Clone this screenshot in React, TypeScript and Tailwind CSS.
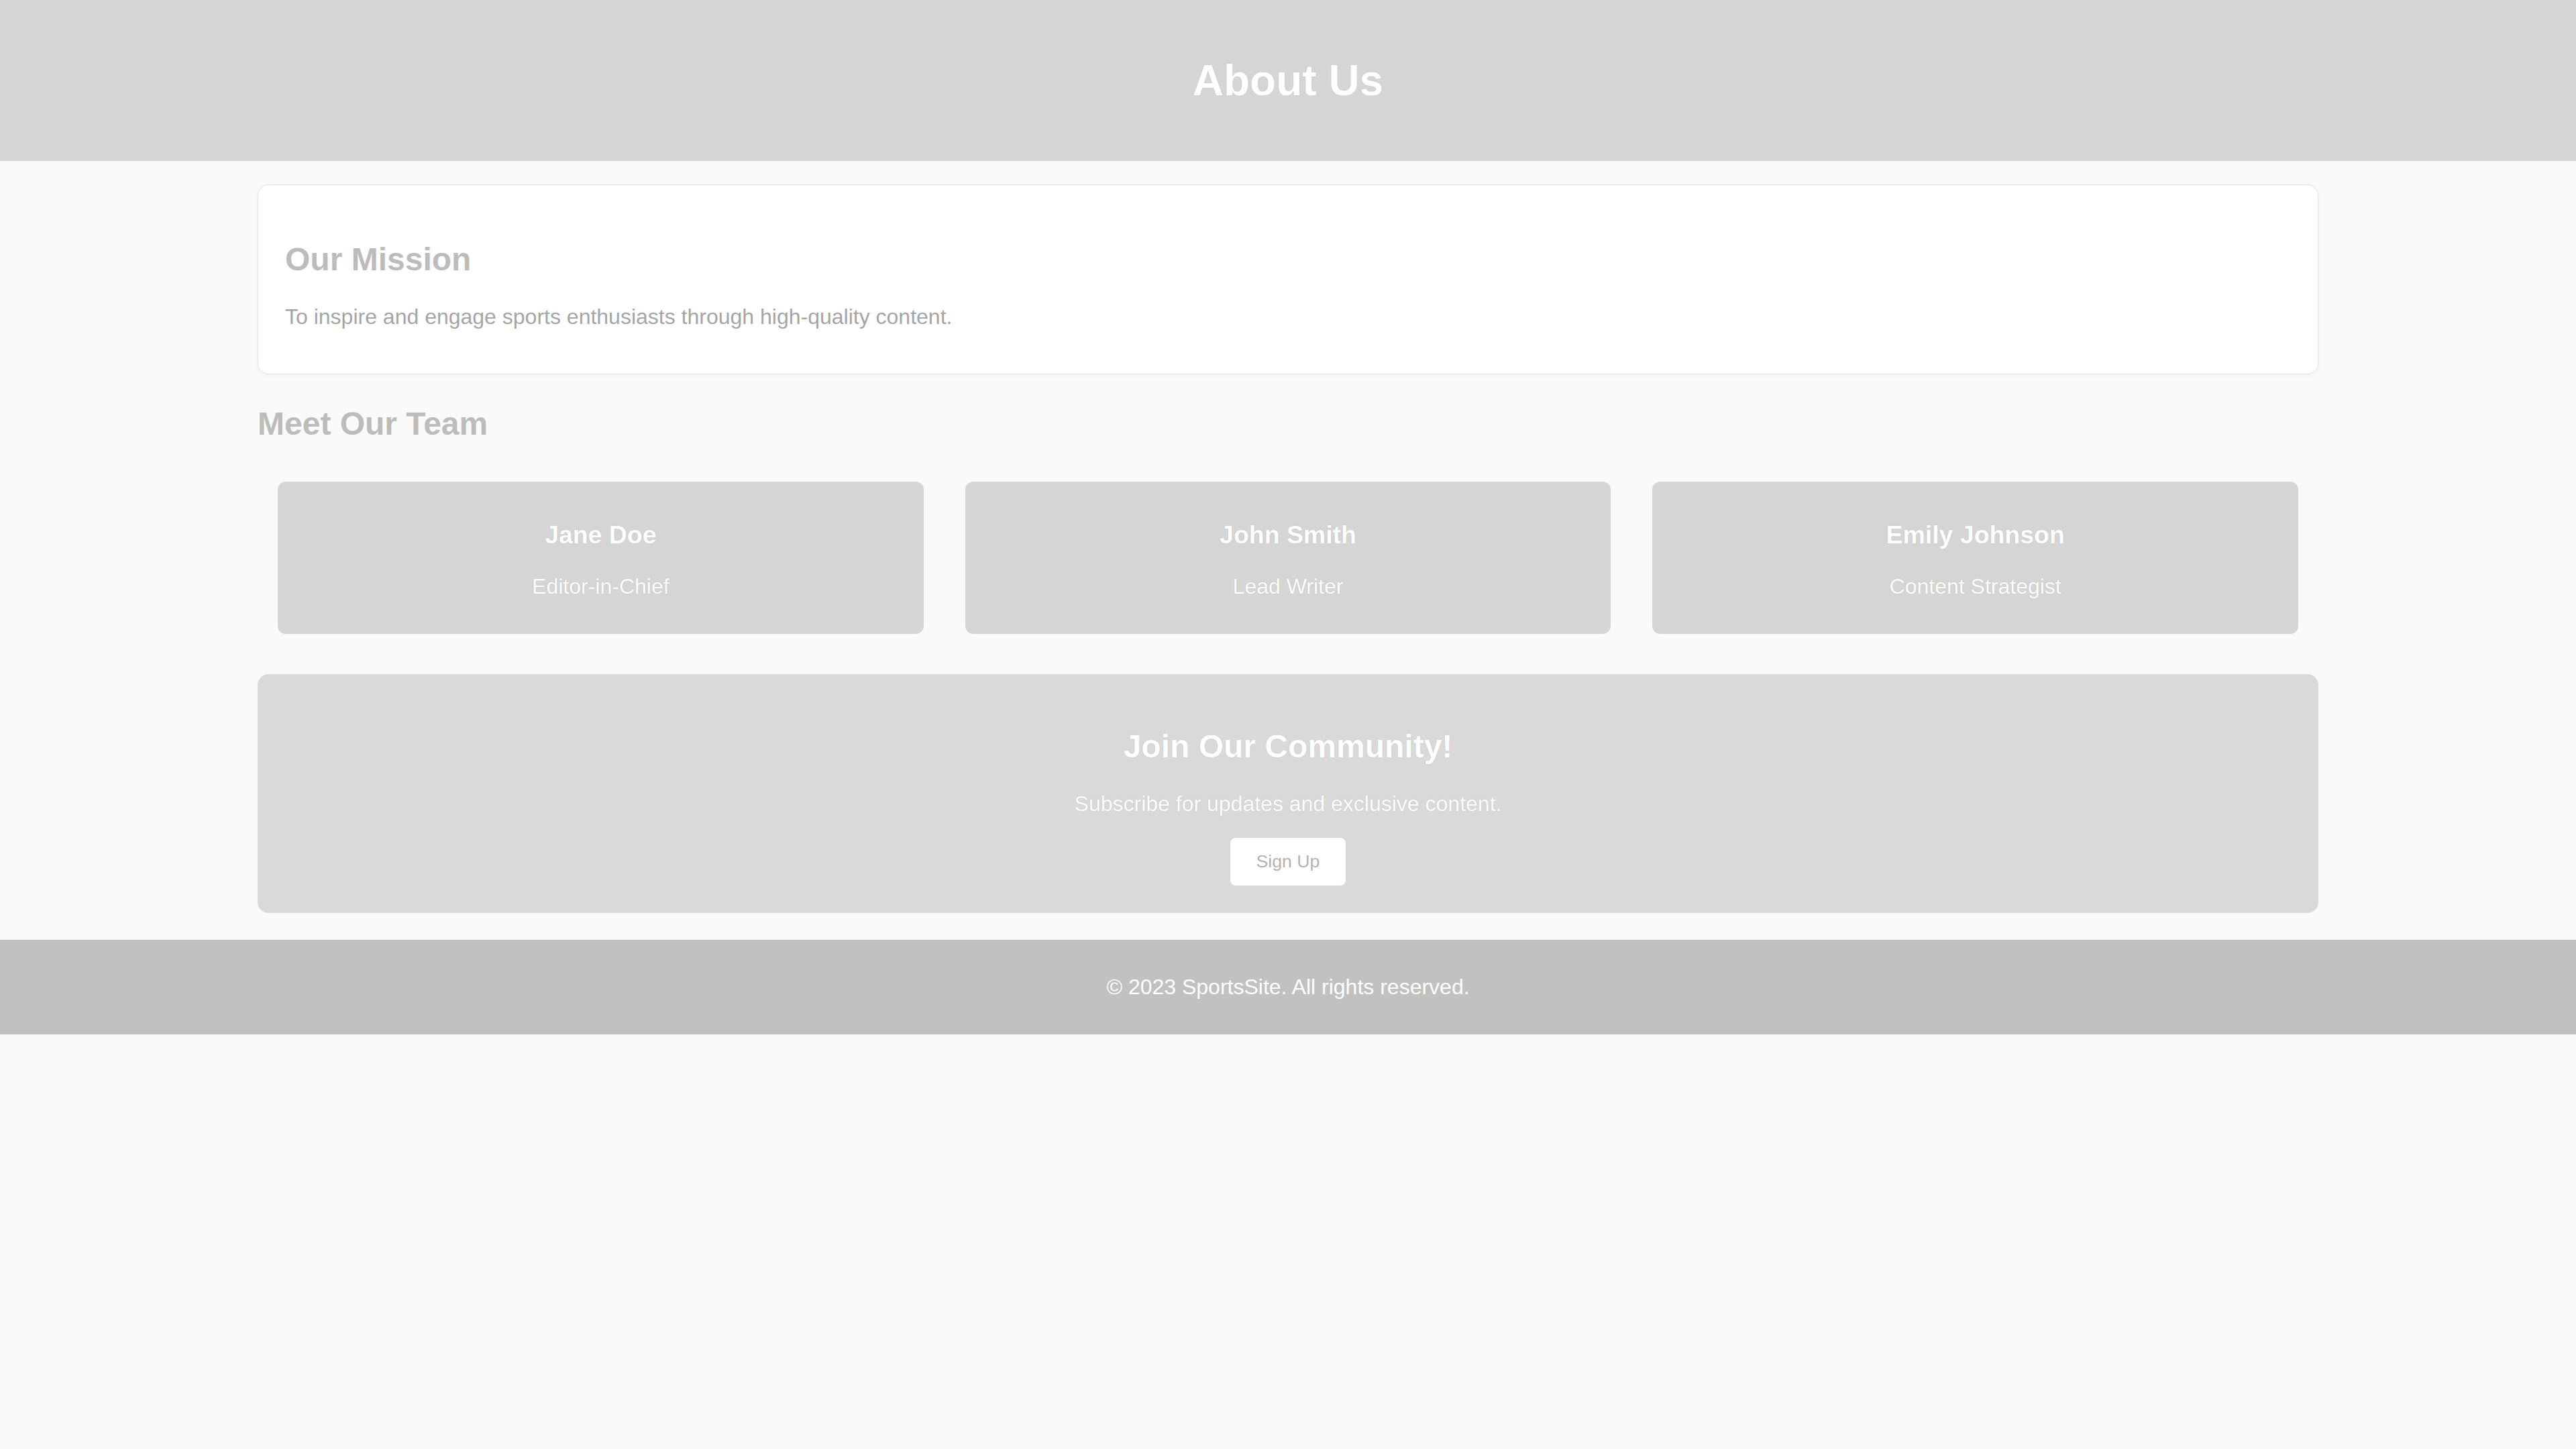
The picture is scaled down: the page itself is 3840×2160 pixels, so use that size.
import React from "react";

const team = [
  { name: "Jane Doe", role: "Editor-in-Chief" },
  { name: "John Smith", role: "Lead Writer" },
  { name: "Emily Johnson", role: "Content Strategist" },
];

export default function App() {
  return (
    <div className="min-h-screen bg-[#fafafa] font-['Liberation_Sans',Arial,sans-serif]">
      <header className="h-[240px] bg-[#d5d5d5] flex items-center justify-center">
        <h1 className="text-[64px] leading-[74px] font-bold text-white [text-shadow:0_0_1px_rgba(0,0,0,0.18)]">About Us</h1>
      </header>

      <main className="w-[3072px] mx-auto pt-[35px] pb-[40px] flex flex-col">
        <section className="bg-white border border-[#e3e3e3] rounded-[16px] shadow-[0_2px_10px_rgba(0,0,0,0.04)] px-[40px] pt-[83px] pb-[66px]">
          <h2 className="text-[48px] leading-[55px] font-bold text-[#bcbcbc]">Our Mission</h2>
          <p className="mt-[40px] text-[32px] leading-[37px] text-[#a5a5a5]">
            To inspire and engage sports enthusiasts through high-quality content.
          </p>
        </section>

        <h2 className="mt-[46px] text-[48px] leading-[55px] font-bold text-[#bcbcbc]">Meet Our Team</h2>

        <div className="mt-[59px] px-[30px] grid grid-cols-3 gap-[62px]">
          {team.map((m) => (
            <div
              key={m.name}
              className="bg-[#d5d5d5] rounded-[12px] pt-[58px] pb-[52px] flex flex-col items-center text-white [text-shadow:0_0_1px_rgba(0,0,0,0.22)]"
            >
              <h3 className="text-[37.44px] leading-[43px] font-bold">{m.name}</h3>
              <p className="mt-[37px] text-[32px] leading-[37px]">{m.role}</p>
            </div>
          ))}
        </div>

        <section className="mt-[60px] bg-[#d9d9d9] rounded-[16px] pt-[80px] pb-[41px] flex flex-col items-center text-white">
          <h2 className="text-[48px] leading-[55px] font-bold [text-shadow:0_0_1px_rgba(0,0,0,0.22)]">Join Our Community!</h2>
          <p className="mt-[40px] text-[32px] leading-[37px] [text-shadow:0_0_1px_rgba(0,0,0,0.22)]">Subscribe for updates and exclusive content.</p>
          <button className="mt-[32px] w-[172px] h-[71px] bg-white rounded-[8px] text-[26.67px] leading-[31px] text-[#b3b3b3] flex items-center justify-center">
            Sign Up
          </button>
        </section>
      </main>

      <footer className="h-[141px] bg-[#c1c1c1] flex items-center justify-center">
        <p className="text-[32px] leading-[37px] text-white">© 2023 SportsSite. All rights reserved.</p>
      </footer>
    </div>
  );
}
